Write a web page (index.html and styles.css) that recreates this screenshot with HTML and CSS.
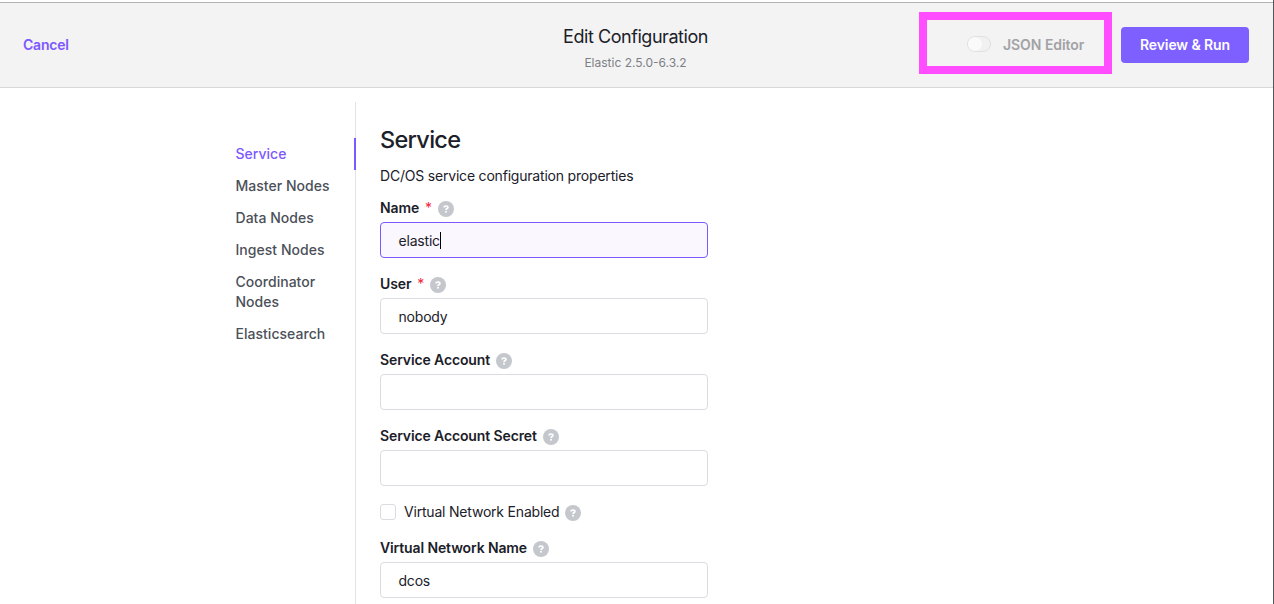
FILE: index.html
```html
<!DOCTYPE html>
<html lang="en">
<head>
<meta charset="utf-8">
<title>Edit Configuration</title>
<link rel="stylesheet" href="styles.css">
</head>
<body>
<svg class="defs" width="0" height="0" aria-hidden="true">
  <symbol id="help" viewBox="0 0 16 16">
    <circle cx="8" cy="8" r="8" fill="#c4c7cc"/>
    <path d="M6.100 6.500C6.100 5.500 6.900 5 8 5s1.900.5 1.900 1.500C9.900 7.600 8 7.500 8 9" fill="none" stroke="#fff" stroke-width="1.700"/>
    <rect x="7.100" y="9.900" width="1.800" height="1.700" fill="#fff"/>
  </symbol>
</svg>
<div class="window">
  <header class="header">
    <div><a class="cancel">Cancel</a></div>
    <div class="header-title">
      <h1 class="title">Edit Configuration</h1>
      <p class="subtitle">Elastic 2.5.0-6.3.2</p>
    </div>
    <div class="header-actions">
      <div class="highlight">
        <span class="toggle"><span class="knob"></span></span>
        <span class="toggle-label">JSON Editor</span>
      </div>
      <button class="run">Review &amp; Run</button>
    </div>
  </header>
  <main class="content">
    <nav class="tabs">
      <a class="tab active">Service</a>
      <a class="tab">Master Nodes</a>
      <a class="tab">Data Nodes</a>
      <a class="tab">Ingest Nodes</a>
      <a class="tab">Coordinator Nodes</a>
      <a class="tab">Elasticsearch</a>
    </nav>
    <section class="form">
      <h2 class="heading">Service</h2>
      <p class="description">DC/OS service configuration properties</p>
      <div class="field">
        <div class="label"><span>Name</span><span class="required">*</span><svg class="help"><use href="#help"/></svg></div>
        <div class="input focused"><span>elastic</span><span class="caret"></span></div>
      </div>
      <div class="field">
        <div class="label"><span>User</span><span class="required">*</span><svg class="help"><use href="#help"/></svg></div>
        <div class="input">nobody</div>
      </div>
      <div class="field">
        <div class="label"><span>Service Account</span><svg class="help"><use href="#help"/></svg></div>
        <div class="input"></div>
      </div>
      <div class="field">
        <div class="label"><span>Service Account Secret</span><svg class="help"><use href="#help"/></svg></div>
        <div class="input"></div>
      </div>
      <div class="check-row"><span class="checkbox"></span><span>Virtual Network Enabled</span><svg class="help"><use href="#help"/></svg></div>
      <div class="field">
        <div class="label"><span>Virtual Network Name</span><svg class="help"><use href="#help"/></svg></div>
        <div class="input">dcos</div>
      </div>
    </section>
  </main>
</div>
</body>
</html>
```
FILE: styles.css
```css
* { box-sizing: border-box; }
body {
  margin: 0;
  background: #fff;
  color: #1b2029;
  font: 14px/20px Inter, "Liberation Sans", sans-serif;
  letter-spacing: -0.2px;
  overflow: hidden;
}
.defs { position: absolute; }
.window {
  height: 604px;
  padding-top: 2px;
  border-right: 1px solid #55565a;
  overflow: hidden;
}
.header {
  display: grid;
  grid-template-columns: 1fr auto 1fr;
  height: 86px;
  background: #f3f3f3;
  border-top: 1px solid #b2b2b2;
  border-bottom: 1px solid #d8d8d8;
}
.cancel {
  display: inline-block;
  margin: 32px 0 0 23px;
  color: #7d58ff;
  font-weight: 600;
}
.header-title { padding: 22px 2px 0 0; text-align: center; }
.title {
  margin: 0;
  font-size: 18px;
  font-weight: 400;
  line-height: 24px;
  letter-spacing: -0.45px;
}
.subtitle {
  margin: 6px 0 0;
  color: #7c7f86;
  font-size: 12px;
  line-height: 16px;
  letter-spacing: 0;
}
.header-actions {
  display: flex;
  justify-content: flex-end;
  align-items: flex-start;
  padding: 9px 24px 0 0;
}
.highlight {
  display: flex;
  align-items: center;
  width: 193px;
  height: 62px;
  padding: 4px 0 0 40px;
  border: 8px solid #ff4dff;
}
.toggle {
  width: 24px;
  height: 16px;
  margin: -2px 12px 0 0;
  border: 1px solid #e0e0e1;
  border-radius: 8px;
  background: #f1f1f1;
}
.knob {
  display: block;
  width: 14px;
  height: 14px;
  border-radius: 50%;
  background: #fafafa;
}
.toggle-label {
  color: #a1a2a5;
  font-weight: 600;
  letter-spacing: -0.05px;
  white-space: nowrap;
}
.run {
  width: 128px;
  height: 36px;
  margin: 15px 0 0 9px;
  padding: 0;
  border: 0;
  border-radius: 4px;
  background: #7d60ff;
  color: #fff;
  font: 600 14px/20px Inter, sans-serif;
  letter-spacing: -0.1px;
}
.content { display: flex; padding: 14px 0 0 235.5px; }
.tabs {
  width: 120.5px;
  height: 520px;
  padding-top: 36px;
  border-right: 1px solid #e3e4e6;
}
.tab {
  display: block;
  margin-right: -1px;
  padding: 6px 16px 6px 0;
  color: #4c5059;
  font-weight: 500;
  letter-spacing: 0.03px;
}
.active { border-right: 2px solid #7d58ff; color: #7d58ff; }
.form { width: 352px; padding: 22px 0 0 24px; }
.heading {
  margin: 0;
  font-size: 23.5px;
  font-weight: 500;
  line-height: 32px;
  letter-spacing: -0.7px;
}
.description { margin: 10px 0 12px; white-space: nowrap; }
.field { margin-bottom: 16px; }
.label, .check-row { display: flex; height: 20px; white-space: nowrap; }
.label { margin-bottom: 4px; font-weight: 600; letter-spacing: -0.12px; }
.required { margin-left: 6px; color: #f0283c; font-weight: 400; }
.help { width: 16px; height: 16px; margin: 3px 0 0 6px; }
.input {
  display: flex;
  width: 328px;
  height: 36px;
  padding: 8px 17.5px;
  border: 1px solid #dadce1;
  border-radius: 4px;
}
.focused { border-color: #7d58ff; background: #faf7ff; }
.caret { width: 1px; height: 17px; margin-top: 1px; background: #000; }
.check-row { margin-bottom: 16px; }
.checkbox {
  width: 16px;
  height: 16px;
  margin: 2px 8px 0 0;
  border: 1px solid #dadce1;
  border-radius: 3px;
}
```
